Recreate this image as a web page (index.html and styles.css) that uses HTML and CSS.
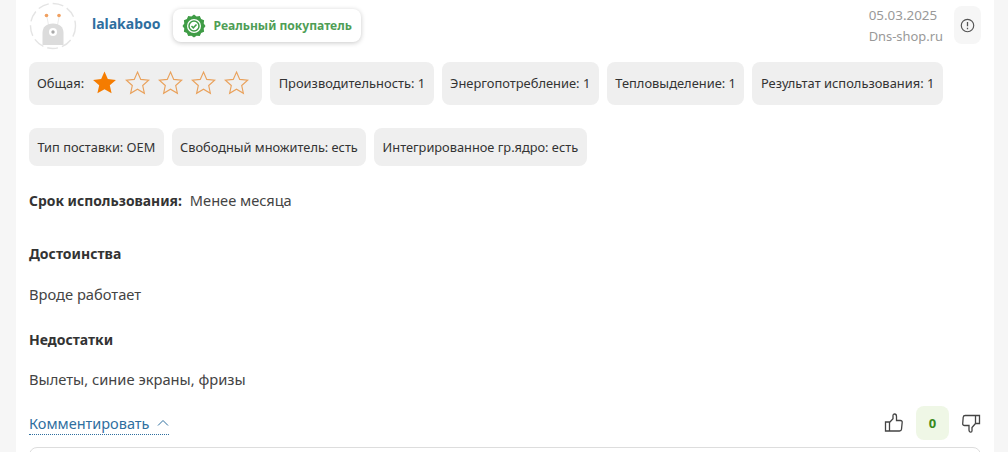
FILE: index.html
```html
<!DOCTYPE html>
<html lang="ru">
<head>
<meta charset="utf-8">
<title>Отзыв</title>
<link rel="stylesheet" href="styles.css">
</head>
<body>
<main class="card">
  <header class="head">
    <svg class="avatar" viewBox="0 0 48 48" width="48" height="48" aria-hidden="true">
      <circle cx="24" cy="24" r="22.5" fill="none" stroke="#e4e4e4" stroke-width="1.4" stroke-dasharray="11 4"/>
      <path d="M18 15l1.500 8M30 15l-1.500 8" stroke="#ececec" stroke-width="1" fill="none"/>
      <circle cx="17.500" cy="13.500" r="1.800" fill="#f0a060"/>
      <circle cx="30" cy="13.500" r="1.800" fill="#f0a060"/>
      <path d="M13.500 43V31c0-6 4-9.500 10.500-9.500s10.500 3.500 10.500 9.500v12z" fill="#dcdcdc"/>
      <circle cx="24" cy="30" r="4" fill="#fff"/>
      <circle cx="24" cy="30" r="1.700" fill="#a9a9a9"/>
    </svg>
    <a class="name">lalakaboo</a>
    <div class="badge">
      <svg viewBox="0 0 24 24" width="24" height="24" aria-hidden="true">
        <path d="M12 .5l2.600 1.900 3.200-.4 1.300 3 3 1.300-.4 3.200L23.500 12l-1.800 2.600.4 3.200-3 1.300-1.300 3-3.200-.4L12 23.500l-2.600-1.800-3.200.4-1.300-3-3-1.300.4-3.200L.5 12l1.800-2.500-.4-3.200 3-1.300 1.300-3 3.200.4z" fill="#3f9c46"/>
        <circle cx="12" cy="12" r="7" fill="#fff"/>
        <circle cx="12" cy="12" r="5" fill="none" stroke="#3f9c46" stroke-width="1.500"/>
        <path d="M9.500 12l1.800 1.800 3.200-3.400" fill="none" stroke="#3f9c46" stroke-width="1.500"/>
      </svg>
      <span>Реальный покупатель</span>
    </div>
    <div class="meta">
      <div class="date">05.03.2025</div>
      <div>Dns-shop.ru</div>
    </div>
    <button class="report" aria-label="Пожаловаться">
      <svg viewBox="0 0 14 14" width="15" height="15" aria-hidden="true">
        <circle cx="7" cy="7" r="5.800" fill="none" stroke="#555" stroke-width="1.100"/>
        <path d="M7 3.800v3.900M7 9.200v1.200" stroke="#555" stroke-width="1.200"/>
      </svg>
    </button>
  </header>

  <div class="tags rating-row">
    <div class="tag tag-big tag-rating">Общая:
      <div class="stars">
        <svg class="star" viewBox="0 0 24 24" width="25" height="25"><path class="full" d="M12 1.500l3.200 7.200 7.800.8-5.900 5.200 1.700 7.700L12 18.400l-6.800 4 1.700-7.700L1 9.500l7.800-.8z"/></svg>
        <svg class="star" viewBox="0 0 24 24" width="25" height="25"><path class="empty" d="M12 2l3.100 7 7.600.8-5.700 5.100 1.600 7.500-6.600-3.900-6.600 3.900 1.600-7.500-5.700-5.100 7.600-.8z"/></svg>
        <svg class="star" viewBox="0 0 24 24" width="25" height="25"><path class="empty" d="M12 2l3.100 7 7.600.8-5.700 5.100 1.600 7.500-6.600-3.900-6.600 3.900 1.600-7.500-5.700-5.100 7.600-.8z"/></svg>
        <svg class="star" viewBox="0 0 24 24" width="25" height="25"><path class="empty" d="M12 2l3.100 7 7.600.8-5.700 5.100 1.600 7.500-6.600-3.900-6.600 3.900 1.600-7.500-5.700-5.100 7.600-.8z"/></svg>
        <svg class="star" viewBox="0 0 24 24" width="25" height="25"><path class="empty" d="M12 2l3.100 7 7.600.8-5.700 5.100 1.600 7.500-6.600-3.900-6.600 3.900 1.600-7.500-5.700-5.100 7.600-.8z"/></svg>
      </div>
    </div>
    <div class="tag tag-big">Производительность: 1</div>
    <div class="tag tag-big">Энергопотребление: 1</div>
    <div class="tag tag-big">Тепловыделение: 1</div>
    <div class="tag tag-big">Результат использования: 1</div>
  </div>

  <div class="tags props-row">
    <div class="tag">Тип поставки: OEM</div>
    <div class="tag">Свободный множитель: есть</div>
    <div class="tag">Интегрированное гр.ядро: есть</div>
  </div>

  <p class="term"><b>Срок использования:</b><span>Менее месяца</span></p>

  <h3 class="title first">Достоинства</h3>
  <p class="text">Вроде работает</p>
  <h3 class="title">Недостатки</h3>
  <p class="text last">Вылеты, синие экраны, фризы</p>

  <footer class="foot">
    <a class="comment">Комментировать
      <svg viewBox="0 0 12 8" width="12" height="8" aria-hidden="true"><path d="M1 6.500L6 1.500l5 5" fill="none" stroke="#2f6f9f" stroke-width="1"/></svg>
    </a>
    <div class="votes">
      <svg viewBox="0 0 20 20" width="20" height="20" aria-hidden="true"><path class="hand" d="M1.500 9h4v9h-4zM5.500 9.500l3.500-3.700V2.500c0-1 .7-1.500 1.500-1.500 1.200 0 2 1 2 2.500V7.500h4c1 0 1.800.8 1.700 1.800l-.7 7c-.1 1-1 1.700-2 1.700H5.500z"/></svg>
      <span class="count">0</span>
      <svg viewBox="0 0 20 20" width="20" height="20" aria-hidden="true"><path class="hand" d="M18.500 2.500h-4v8h4zM14.500 10.500L11 14.500v3.200c0 1-.6 1.500-1.300 1.500-1.100 0-1.700-1-1.700-2.500v-4.200H3.500c-1 0-1.900-.8-1.800-1.800l.5-6.500c.1-1 1-1.700 2-1.700h10.300z"/></svg>
    </div>
  </footer>
  <div class="input-box"></div>
</main>
</body>
</html>
```

FILE: styles.css
```css
html, body {
  margin: 0;
  height: 100%;
  overflow: hidden;
  background: #f6f6f6;
}
body {
  font-family: "Noto Sans", "Open Sans", sans-serif;
  color: #333;
}
.card {
  margin: 0 14px 0 16px;
  height: 452px;
  background: #fff;
  padding: 2px 13px 0;
  box-sizing: border-box;
  overflow: hidden;
}
.head {
  display: flex;
  align-items: flex-start;
  height: 48px;
}
.avatar {
  flex: none;
  margin-right: 15px;
}
.name {
  margin-top: 13px;
  font-size: 14px;
  line-height: 18px;
  font-weight: 700;
  color: #2f6f9f;
}
.badge {
  display: flex;
  align-items: center;
  gap: 8px;
  height: 33px;
  margin: 7px 0 0 12px;
  padding: 0 9px;
  border-radius: 8px;
  background: #fff;
  box-shadow: 0 1px 5px rgba(0, 0, 0, .22);
  color: #4f9e56;
  font-size: 12.1px;
  font-weight: 700;
}
.meta {
  margin: 3px 0 0 auto;
  font-size: 12.9px;
  line-height: 21px;
  color: #999;
}
.date {
  font-size: 13.4px;
}
.report {
  display: flex;
  align-items: center;
  justify-content: center;
  width: 27px;
  height: 38px;
  margin: 4px 0 0 11px;
  padding: 0;
  border: 0;
  border-radius: 8px;
  background: #f6f6f6;
}
.tags {
  display: flex;
  gap: 8px;
}
.rating-row {
  margin-top: 12px;
}
.props-row {
  margin-top: 23px;
}
.tag {
  display: flex;
  align-items: center;
  height: 38px;
  padding: 0 8.4px;
  border-radius: 8px;
  background: #efefef;
  font-size: 12.8px;
  color: #333;
  white-space: nowrap;
}
.tag-big {
  box-sizing: border-box;
  height: 43px;
  padding: 0 8.5px 2px;
  font-size: 12.9px;
}
.tag-rating {
  padding: 0 13px 2px 8px;
}
.stars {
  display: flex;
  gap: 8px;
  margin-left: 8px;
}
.star {
  display: block;
}
.full {
  fill: #f57c00;
}
.empty {
  fill: none;
  stroke: #e9a15b;
  stroke-width: 1.100;
}
.term {
  margin: 24px 0 0;
  font-size: 14.600px;
  line-height: 20px;
  color: #444;
}
.term b {
  margin-right: 8px;
  font-size: 13.900px;
  color: #333;
}
.title {
  margin: 26px 0 0;
  font-size: 14px;
  line-height: 20px;
  font-weight: 700;
  color: #333;
}
.title.first {
  margin-top: 33px;
}
.text {
  margin: 20px 0 0;
  font-size: 14.700px;
  line-height: 20px;
  color: #444;
}
.text.last {
  margin-top: 19px;
}
.foot {
  display: flex;
  align-items: center;
  justify-content: space-between;
  margin-top: 17px;
  height: 34px;
}
.comment {
  display: flex;
  align-items: center;
  gap: 8px;
  height: 22px;
  margin-top: 1px;
  font-size: 14.500px;
  color: #2f6f9f;
  border-bottom: 1px dotted #2f6f9f;
}
.votes {
  display: flex;
  align-items: center;
  gap: 12px;
}
.count {
  display: flex;
  align-items: center;
  justify-content: center;
  width: 33px;
  height: 34px;
  border-radius: 8px;
  background: #eff7e6;
  color: #3a8a1c;
  font-size: 13px;
  font-weight: 700;
}
.hand {
  fill: none;
  stroke: #444;
  stroke-width: 1.300;
}
.input-box {
  height: 30px;
  margin-top: 7px;
  border: 1px solid #ddd;
  border-radius: 8px 8px 0 0;
}
```
